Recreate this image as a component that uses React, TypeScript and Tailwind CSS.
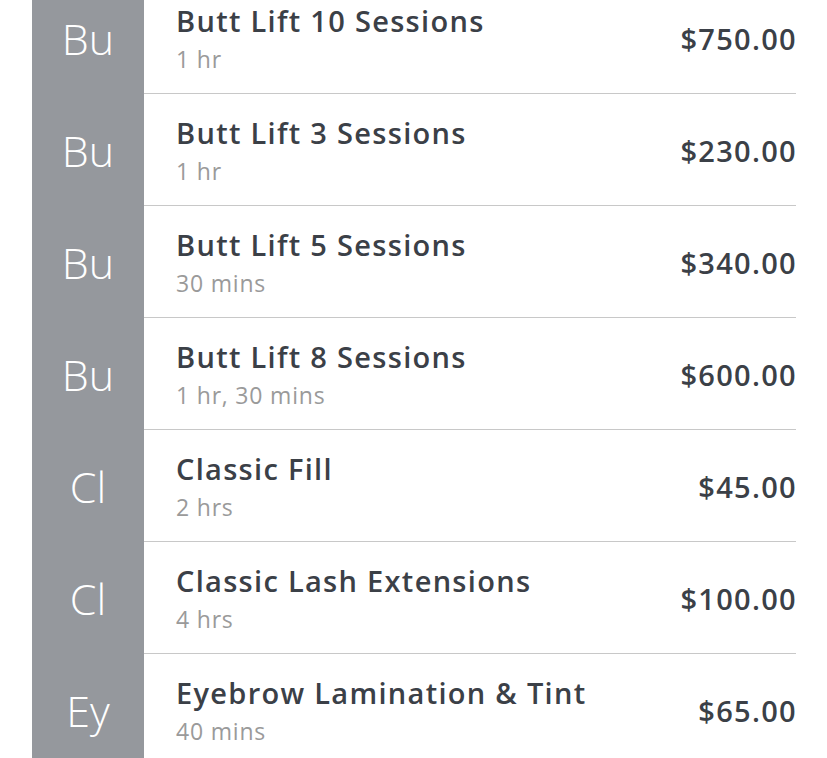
const services = [
  { tag: "Bu", name: "Butt Lift 10 Sessions", duration: "1 hr", price: "$750.00" },
  { tag: "Bu", name: "Butt Lift 3 Sessions", duration: "1 hr", price: "$230.00" },
  { tag: "Bu", name: "Butt Lift 5 Sessions", duration: "30 mins", price: "$340.00" },
  { tag: "Bu", name: "Butt Lift 8 Sessions", duration: "1 hr, 30 mins", price: "$600.00" },
  { tag: "Cl", name: "Classic Fill", duration: "2 hrs", price: "$45.00" },
  { tag: "Cl", name: "Classic Lash Extensions", duration: "4 hrs", price: "$100.00" },
  { tag: "Ey", name: "Eyebrow Lamination & Tint", duration: "40 mins", price: "$65.00" },
]

export default function App() {
  return (
    <div className="h-[758px] w-[827px] overflow-hidden bg-white font-['Open_Sans',sans-serif]">
      <div className="mt-[-18px] pl-[32px] pr-[31px]">
        {services.map((s, i) => (
          <div key={i} className="flex h-[112px]">
            {/* tile */}
            <div className="flex w-[112px] shrink-0 items-center justify-center bg-[#95989d] pt-[2px] text-[43px] font-light text-white">
              {s.tag}
            </div>

            {/* details */}
            <div className="flex flex-1 items-center justify-between border-b border-[#c8c8c8] pl-[32px]">
              <div className="flex flex-col pt-[1px]">
                <span className="text-[29px] font-semibold leading-[38px] tracking-[1.3px] text-[#3b4047]">{s.name}</span>
                <span className="mt-[3px] text-[23px] leading-[32px] tracking-[0.8px] text-[#9a9a9a]">{s.duration}</span>
              </div>
              <span className="mr-[-1px] pt-[3px] text-[29px] font-semibold tracking-[1.3px] text-[#3b4047]">{s.price}</span>
            </div>
          </div>
        ))}
      </div>
    </div>
  )
}
